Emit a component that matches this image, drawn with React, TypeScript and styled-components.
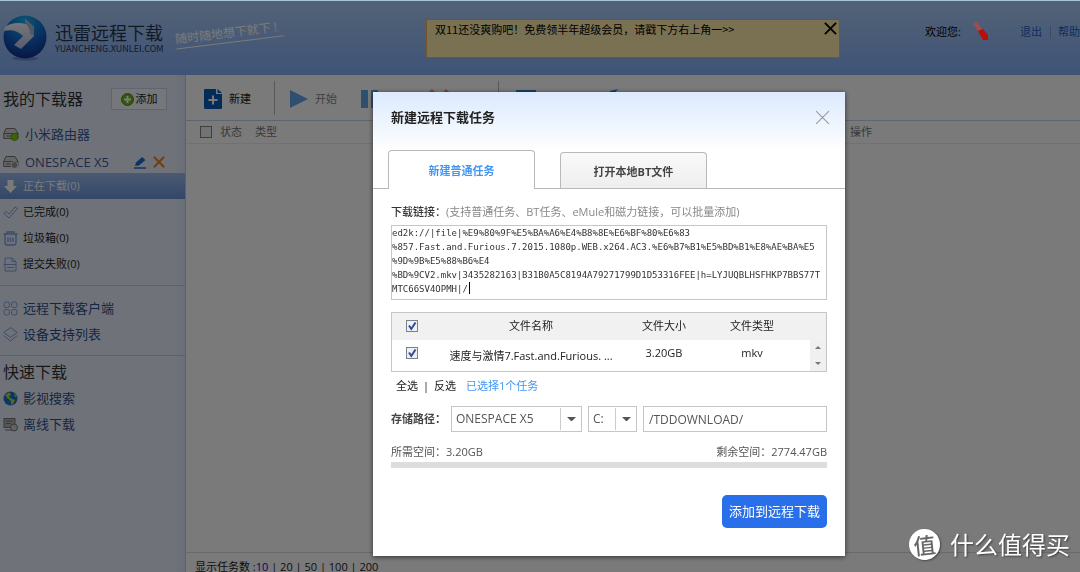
import React, { useState } from "react";
import styled, { createGlobalStyle, css } from "styled-components";

const Global = createGlobalStyle`
  * { box-sizing: border-box; }
  body { margin: 0; background: #fff; }
  body, button, input, select, textarea, table {
    font-family: "Open Sans", "Noto Sans CJK SC", sans-serif;
    font-size: 11px;
    line-height: 18px;
    color: #222;
  }
  button { background: none; border: 0; padding: 0; }
  a { text-decoration: none; color: inherit; }
  svg { display: block; flex: none; }
`;

const Page = styled.div`
  height: 100vh;
  display: flex;
  flex-direction: column;
  overflow: hidden;
`;

/* ---------- header ---------- */
const Header = styled.header`
  flex: none;
  height: 75px;
  display: flex;
  align-items: center;
  padding-left: 3px;
  border-top: 1px solid #a9c4d8;
  background: linear-gradient(#adcdf6, #84aef8);
`;
const Brand = styled.div`
  flex: none;
  width: 120px;
  margin-left: 8px;
  color: #25364f;
  white-space: nowrap;
`;
const BrandName = styled.h1`
  margin: 0;
  font-size: 18px;
  font-weight: 400;
  line-height: 22px;
`;
const Domain = styled.small`
  display: block;
  font-family: "Noto Sans CJK SC", sans-serif;
  font-size: 9px;
  line-height: 10px;
`;
const Slogan = styled.span`
  flex: none;
  width: 108px;
  margin-bottom: 10px;
  font-size: 12px;
  color: #fff;
  white-space: nowrap;
  border-bottom: 1px solid #fff;
  transform: rotate(-7deg);
`;
const Banner = styled.div`
  flex: none;
  width: 414px;
  height: 39px;
  margin-left: 143px;
  padding: 0 2px 0 8px;
  display: flex;
  justify-content: space-between;
  align-items: flex-start;
  background: #feecab;
  border: 1px solid #f0b060;
  font-family: "Noto Sans CJK SC", sans-serif;
  color: #000;
`;
const BannerClose = styled.button`
  padding-top: 2px;
`;
const UserNav = styled.nav`
  margin-left: auto;
  margin-bottom: 12px;
  display: flex;
  align-items: center;
  white-space: nowrap;
  color: #000;
`;
const Avatar = styled.span`
  position: relative;
  z-index: 3;
  margin: 0 30px 0 12px;
`;
const NavLink = styled.a`
  color: #1f62c4;
`;
const NavDivider = styled.span`
  width: 1px;
  height: 12px;
  margin: 0 7px 0 8px;
  background: #7d9cd6;
`;

/* ---------- sidebar ---------- */
const Body = styled.div`
  flex: 1;
  min-height: 0;
  display: flex;
`;
const Sidebar = styled.aside`
  flex: none;
  width: 186px;
  background: linear-gradient(90deg, #e9f1fc 170px, #dbe7fb);
  border-right: 1px solid #b8cbec;
`;
const SideTitle = styled.div<{ $quick?: boolean }>`
  display: flex;
  align-items: center;
  height: ${(p) => (p.$quick ? 29 : 42)}px;
  padding: ${(p) => (p.$quick ? 3 : 6)}px 18px 0 3px;
  justify-content: space-between;
`;
const SideHeading = styled.h2`
  margin: 0;
  font-size: 16px;
  font-weight: 400;
  line-height: 24px;
  color: #333;
`;
const AddButton = styled.button`
  display: flex;
  align-items: center;
  justify-content: center;
  gap: 2px;
  width: 56px;
  height: 22px;
  border: 1px solid #c9d5ea;
  background: #f6f9ff;
`;
const Device = styled.div`
  display: flex;
  align-items: center;
  gap: 6px;
  height: 28px;
  padding: 6px 20px 0 3px;
  font-size: 13px;
  color: #3a5a98;
`;
const DeviceName = styled.a`
  margin-right: auto;
`;
const SideList = styled.ul`
  list-style: none;
  margin: 0;
  padding: 0;
`;
const SideGroup = styled.div<{ $top?: number }>`
  padding: ${(p) => p.$top ?? 0}px 0 8px;
  border-bottom: 1px solid #b4cfee;
`;
const SideLink = styled.a<{ $active?: boolean; $blue?: boolean }>`
  display: flex;
  align-items: center;
  gap: 5px;
  height: 26px;
  padding-left: 3px;
  color: #222;
  ${(p) => p.$blue && css`font-size: 13px; color: #2f4f8f;`}
  ${(p) => p.$active && css`background: linear-gradient(#9dbdf0, #6a94da); color: #fff;`}
`;

/* ---------- main ---------- */
const Main = styled.main`
  flex: 1;
  min-width: 0;
  display: flex;
  flex-direction: column;
`;
const Toolbar = styled.div`
  flex: none;
  display: flex;
  align-items: center;
  height: 46px;
  padding-left: 18px;
  border-bottom: 1px solid #c3d3ea;
`;
const Tool = styled.button<{ $width?: number; $muted?: boolean }>`
  display: flex;
  align-items: center;
  gap: 7px;
  margin-right: 23px;
  padding-top: 3px;
  width: ${(p) => (p.$width ? p.$width + "px" : "auto")};
  color: ${(p) => (p.$muted ? "#888" : "#222")};
`;
const ToolDivider = styled.span`
  width: 1px;
  height: 34px;
  margin-right: 15px;
  background: #bbb;
`;
const TaskTable = styled.table`
  flex: none;
  width: 100%;
  table-layout: fixed;
  border-collapse: collapse;
  border-bottom: 1px solid #ececec;
`;
const TaskHead = styled.th<{ $width?: number }>`
  width: ${(p) => (p.$width ? p.$width + "px" : "auto")};
  height: 22px;
  padding: 0 0 0 ${(p) => (p.$width === 34 ? 14 : 0)}px;
  text-align: left;
  font-weight: 400;
  color: #777;
`;
const Tick = styled.input`
  appearance: none;
  display: block;
  width: 12px;
  height: 12px;
  margin: 0;
  border: 1px solid #7c828c;
  background: #eef0f4;
  &:checked {
    background: #eef0f4
      url("data:image/svg+xml,%3Csvg xmlns='http://www.w3.org/2000/svg' viewBox='0 0 10 10'%3E%3Cpath d='M2 4.5 4.3 8 8.5 1.5' fill='none' stroke='%23324a9a' stroke-width='2'/%3E%3C/svg%3E");
  }
`;
const Footer = styled.footer`
  flex: none;
  height: 20px;
  margin-top: auto;
  padding: 5px 0 0 9px;
  border-top: 1px solid #dcdcdc;
  font-size: 11px;
  line-height: 18px;
  white-space: pre;
`;
const CurrentSize = styled.a`
  color: #1400d8;
`;

/* ---------- dialog ---------- */
const Scrim = styled.div`
  position: fixed;
  inset: 1px 0 0;
  z-index: 2;
  display: flex;
  justify-content: center;
  align-items: flex-start;
  padding: 91px 0 0 138px;
  background: rgba(0, 0, 0, 0.52);
`;
const Dialog = styled.section`
  width: 472px;
  padding-bottom: 28px;
  background: linear-gradient(#dbeafd, #fff 60px);
  box-shadow: 0 1px 5px rgba(0, 0, 0, 0.6);
`;
const DialogHead = styled.div`
  display: flex;
  justify-content: space-between;
  align-items: center;
  height: 50px;
  padding: 0 15px 0 18px;
`;
const DialogTitle = styled.h2`
  margin: 0;
  font-size: 13px;
  font-weight: 700;
`;
const Tabs = styled.div`
  display: flex;
  align-items: flex-end;
  gap: 25px;
  height: 47px;
  padding-left: 15px;
  border-bottom: 1px solid #b9b9b9;
`;
const Tab = styled.button<{ $active?: boolean }>`
  width: 147px;
  height: ${(p) => (p.$active ? 39 : 36)}px;
  margin-bottom: ${(p) => (p.$active ? -1 : 0)}px;
  padding-top: 2px;
  border: 1px solid #b9b9b9;
  border-bottom: 0;
  border-radius: 4px 4px 0 0;
  font-weight: 700;
  color: ${(p) => (p.$active ? "#4295f5" : "#444")};
  background: ${(p) => (p.$active ? "#fff" : "linear-gradient(#f9f9f9, #eee)")};
`;
const Form = styled.form`
  padding: 14px 18px 0;
`;
const FieldLabel = styled.label`
  display: block;
  font-weight: 500;
  color: #333;
`;
const Hint = styled.span`
  font-weight: 400;
  color: #888;
`;
const LinkField = styled.div`
  position: relative;
  margin-top: 4px;
`;
const LinkBox = styled.textarea`
  display: block;
  width: 100%;
  height: 75px;
  padding: 0;
  border: 1px solid #c6c6c6;
  outline: 0;
  resize: none;
  overflow: hidden;
  white-space: pre;
  font-family: "DejaVu Sans Mono", monospace;
  font-size: 9px;
  line-height: 14px;
  color: #333;
`;
const Caret = styled.span`
  position: absolute;
  left: 78px;
  top: 57px;
  width: 1px;
  height: 12px;
  background: #000;
`;
const FileBox = styled.div`
  position: relative;
  margin-top: 12px;
  border: 1px solid #c6c6c6;
`;
const FileTable = styled.table`
  width: 100%;
  table-layout: fixed;
  border-collapse: collapse;
  text-align: center;
`;
const FileHead = styled.th<{ $width?: number }>`
  width: ${(p) => (p.$width ? p.$width + "px" : "auto")};
  height: 27px;
  padding: 0 0 2px;
  background: #f1f1f1;
  font-weight: 400;
`;
const FileCell = styled.td<{ $name?: boolean }>`
  height: 31px;
  padding: 0 0 ${(p) => (p.$name ? 0 : 5)}px;
`;
const TickHolder = styled.div`
  padding-left: 14px;
`;
const Scrollbar = styled.div`
  position: absolute;
  right: 0;
  bottom: 0;
  width: 16px;
  height: 31px;
  display: flex;
  flex-direction: column;
  align-items: center;
  justify-content: space-around;
  background: #f0f0f0;
`;
const SelectRow = styled.div`
  display: flex;
  align-items: center;
  gap: 5px;
  padding: 5px 0 0 5px;
`;
const Count = styled.span`
  margin-left: 5px;
  color: #4295f5;
`;
const PathRow = styled.div`
  display: flex;
  align-items: center;
  gap: 6px;
  margin-top: 11px;
`;
const PathLabel = styled.label`
  width: 54px;
  font-weight: 700;
  color: #444;
  white-space: nowrap;
`;
const SelectWrap = styled.div<{ $width: number }>`
  display: flex;
  width: ${(p) => p.$width}px;
  height: 26px;
  border: 1px solid #c6c6c6;
`;
const Select = styled.select`
  appearance: none;
  flex: 1;
  min-width: 0;
  padding: 0 0 0 4px;
  border: 0;
  outline: 0;
  background: none;
  font-size: 12px;
  color: #555;
`;
const Arrow = styled.span`
  display: flex;
  align-items: center;
  justify-content: center;
  width: 21px;
  margin: 1px 0;
  border-left: 1px solid #ccc;
`;
const PathInput = styled.input`
  flex: 1;
  min-width: 0;
  height: 26px;
  padding: 1px 5px 0;
  border: 1px solid #c6c6c6;
  font-size: 12px;
  color: #555;
`;
const SpaceRow = styled.div`
  display: flex;
  justify-content: space-between;
  margin-top: 11px;
  color: #555;
`;
const SpaceBar = styled.div`
  height: 6px;
  margin-top: 1px;
  background: #ddd;
`;
const Submit = styled.button`
  display: block;
  width: 105px;
  height: 33px;
  margin: 27px 0 0 auto;
  padding-bottom: 2px;
  border-radius: 5px;
  background: #286fe9;
  color: #fff;
  font-size: 13px;
`;

/* ---------- watermark ---------- */
const Watermark = styled.div`
  position: fixed;
  right: 10px;
  bottom: 12px;
  z-index: 4;
  display: flex;
  align-items: center;
  gap: 10px;
  font-family: "Noto Sans CJK SC", sans-serif;
  font-size: 24px;
  line-height: 32px;
  color: #fff;
  text-shadow: 1px 1px 2px rgba(0, 0, 0, 0.5);
`;
const Seal = styled.span`
  width: 31px;
  height: 31px;
  border-radius: 50%;
  background: #fff;
  color: #666;
  font-size: 22px;
  font-weight: 500;
  line-height: 30px;
  text-align: center;
  text-shadow: none;
  transform: rotate(-6deg);
  box-shadow: 1px 1px 2px rgba(0, 0, 0, 0.4);
`;

const Logo = () => (
  <svg width="44" height="46" viewBox="0 0 44 46" aria-hidden="true">
    <defs>
      <radialGradient id="ball" cx="0.5" cy="0.15" r="0.95">
        <stop offset="0" stopColor="#18b4f4" />
        <stop offset="0.5" stopColor="#1263c8" />
        <stop offset="1" stopColor="#10207c" />
      </radialGradient>
      <linearGradient id="wing" x1="0" y1="0" x2="0" y2="1">
        <stop offset="0" stopColor="#fff" />
        <stop offset="1" stopColor="#b9c0e2" />
      </linearGradient>
    </defs>
    <ellipse cx="22" cy="43.500" rx="13" ry="2" fill="#6e8fc8" />
    <circle cx="22" cy="22" r="21.500" fill="url(#ball)" />
    <path d="M2 12 Q10 6 23 9 L22 4 L31 12 L31 21 L18 34 L11 30 L20 21 Q12 13 1 16Z" fill="url(#wing)" />
    <path d="M22 4 L31 12 L31 21 L27 19 Q27 13 23 9Z" fill="#a9b4d8" />
  </svg>
);
const Cross = ({ size, color, width }: { size: number; color: string; width: number }) => (
  <svg width={size} height={size} viewBox="0 0 14 14" aria-hidden="true">
    <path d="M1 1 13 13M13 1 1 13" stroke={color} strokeWidth={width} fill="none" />
  </svg>
);
const Drive = ({ on }: { on?: boolean }) => (
  <svg width="16" height="14" viewBox="0 0 16 14" aria-hidden="true">
    <path d="M3 1.500h9l3 5v5H.700v-5z" fill="#d4d4d4" stroke="#777" />
    <path d="M1 6.500h14M3 9h6" stroke="#777" />
    <circle cx="11.500" cy="10" r="3.500" fill={on ? "#7ed60a" : "#999"} stroke={on ? "#5da800" : "#eee"} />
  </svg>
);
const line = { fill: "none", stroke: "#7d9fdc", strokeWidth: 1 };
const Glyph = ({ children }: { children: React.ReactNode }) => (
  <svg width="15" height="15" viewBox="0 0 15 15" aria-hidden="true">{children}</svg>
);
const Triangle = ({ up, size = 9, color = "#555" }: { up?: boolean; size?: number; color?: string }) => (
  <svg width={size} height={size / 2} viewBox="0 0 10 5" preserveAspectRatio="none" aria-hidden="true">
    <path d={up ? "M0 5 5 0 10 5Z" : "M0 0 5 5 10 0Z"} fill={color} />
  </svg>
);

const LINK = [
  "ed2k://|file|%E9%80%9F%E5%BA%A6%E4%B8%8E%E6%BF%80%E6%83",
  "%857.Fast.and.Furious.7.2015.1080p.WEB.x264.AC3.%E6%B7%B1%E5%BD%B1%E8%AE%BA%E5",
  "%9D%9B%E5%88%B6%E4",
  "%BD%9CV2.mkv|3435282163|B31B0A5C8194A79271799D1D53316FEE|h=LYJUQBLHSFHKP7BBS77T",
  "MTC66SV4OPMH|/",
].join("\n");

export default function App() {
  const [link, setLink] = useState(LINK);
  const [path, setPath] = useState("/TDDOWNLOAD/");
  return (
    <Page>
      <Global />
      <Header>
        <Logo />
        <Brand>
          <BrandName>迅雷远程下载</BrandName>
          <Domain>YUANCHENG.XUNLEI.COM</Domain>
        </Brand>
        <Slogan>随时随地想下就下 !</Slogan>
        <Banner>
          <span>双11还没爽购吧！免费领半年超级会员，请戳下方右上角一&gt;&gt;</span>
          <BannerClose aria-label="关闭公告"><Cross size={13} color="#000" width={2} /></BannerClose>
        </Banner>
        <UserNav>
          欢迎您:
          <Avatar>
            <svg width="17" height="20" viewBox="0 0 17 20" aria-hidden="true">
              <path d="M2 1 8 9" stroke="#a8494c" strokeWidth="4" />
              <path d="M5 9 10 7 15 13 15 18 10 18Z" fill="#bd0d0a" />
            </svg>
          </Avatar>
          <NavLink href="#logout">退出</NavLink>
          <NavDivider />
          <NavLink href="#help">帮助</NavLink>
        </UserNav>
      </Header>

      <Body>
        <Sidebar>
          <SideTitle>
            <SideHeading>我的下载器</SideHeading>
            <AddButton>
              <svg width="13" height="13" viewBox="0 0 13 13" aria-hidden="true">
                <circle cx="6.500" cy="6.500" r="6" fill="#6cb80e" stroke="#4c8c08" />
                <path d="M6.500 3v7M3 6.500h7" stroke="#fff" strokeWidth="2" />
              </svg>
              添加
            </AddButton>
          </SideTitle>
          <Device>
            <Drive on />
            <DeviceName href="#mi">小米路由器</DeviceName>
          </Device>
          <Device>
            <Drive />
            <DeviceName href="#onespace">ONESPACE X5</DeviceName>
            <button aria-label="编辑">
              <svg width="13" height="13" viewBox="0 0 13 13" aria-hidden="true">
                <path d="M1 10 2 6.500 8 1 11.500 4 5 9.500Z" fill="#1d6fd0" />
                <path d="M0 12h12" stroke="#1d6fd0" strokeWidth="1.500" />
              </svg>
            </button>
            <button aria-label="删除设备"><Cross size={12} color="#f58220" width={2.5} /></button>
          </Device>
          <SideGroup>
            <SideList>
              <li><SideLink href="#downloading" $active>
                <Glyph><path d="M4.500 1h6v6H14L7.500 14 1 7h3.500z" fill="#fff" /></Glyph>正在下载(0)
              </SideLink></li>
              <li><SideLink href="#done">
                <Glyph><path d="M.800 8.500 3 6.500 6 9 12 2 14.300 3.500 6 13Z" {...line} /></Glyph>已完成(0)
              </SideLink></li>
              <li><SideLink href="#trash">
                <Glyph><path d="M.500 3h14M4 3V1h7v2M2 3v9q0 2 2 2h7q2 0 2-2V3M5 6.500v4.500M7.500 6.500v4.500M10 6.500v4.500" {...line} strokeWidth={1.3} /></Glyph>垃圾箱(0)
              </SideLink></li>
              <li><SideLink href="#failed">
                <Glyph><path d="M2 7V1h7l4 3.500V7M9 1v3.500h4M.600 7.500h13M2 8v6h11V8M4 10.500h7" {...line} /></Glyph>提交失败(0)
              </SideLink></li>
            </SideList>
          </SideGroup>
          <SideGroup $top={9}>
            <SideList>
              <li><SideLink href="#client" $blue>
                <Glyph>
                  <rect x="1" y="1" width="5.500" height="5.500" rx="2" {...line} />
                  <rect x="8.500" y="1" width="5.500" height="5.500" rx="2" {...line} />
                  <rect x="1" y="8.500" width="5.500" height="5.500" rx="2" {...line} />
                  <rect x="8.500" y="8.500" width="5.500" height="5.500" rx="2" {...line} />
                </Glyph>远程下载客户端
              </SideLink></li>
              <li><SideLink href="#devices" $blue>
                <Glyph><path d="M7.500.600 14.300 5.500 7.500 10.300.700 5.500ZM.700 8.500 7.500 14 14.300 8.500" {...line} /></Glyph>设备支持列表
              </SideLink></li>
            </SideList>
          </SideGroup>
          <SideTitle $quick>
            <SideHeading>快速下载</SideHeading>
          </SideTitle>
          <SideList>
            <li><SideLink href="#search" $blue>
              <Glyph>
                <circle cx="7.500" cy="7.500" r="7" fill="#1676cc" />
                <path d="M2 4 6 1.500 8 3 6 6 9 8 12 9 10 13 8 14 8 10 5 7.500ZM11 2 14 5 12 6Z" fill="#b4d84a" />
              </Glyph>影视搜索
            </SideLink></li>
            <li><SideLink href="#offline" $blue>
              <Glyph>
                <rect x="1" y="1.500" width="11" height="9" fill="#b5b5b5" stroke="#777" />
                <path d="M3 4h7M3 6.500h5M2 13h7" stroke="#777" />
                <circle cx="11" cy="10.500" r="3.500" fill="#ccc" stroke="#777" />
              </Glyph>离线下载
            </SideLink></li>
          </SideList>
        </Sidebar>

        <Main>
          <Toolbar>
            <Tool>
              <svg width="18" height="20" viewBox="0 0 18 20" aria-hidden="true">
                <path d="M1 0h11v5h6v14q0 1-1 1H1q-1 0-1-1V1q0-1 1-1z" fill="#0a5cb8" />
                <path d="M13.500 0 18 4h-4.500z" fill="#0a5cb8" />
                <path d="M9 6.500v9M4.500 11h9" stroke="#fff" strokeWidth="2" />
              </svg>
              新建
            </Tool>
            <ToolDivider />
            <Tool $muted>
              <svg width="18" height="18" viewBox="0 0 18 18" aria-hidden="true"><path d="M0 0 18 9 0 18Z" fill="#64a4e8" /></svg>
              开始
            </Tool>
            <Tool $width={46} aria-label="暂停">
              <svg width="18" height="18" viewBox="0 0 18 18" aria-hidden="true"><path d="M1 0h7v18H1zM11 0h7v18h-7z" fill="#64a4e8" /></svg>
            </Tool>
            <Tool $width={46} aria-label="删除"><Cross size={20} color="#f0a080" width={3} /></Tool>
            <ToolDivider />
            <Tool $width={70} aria-label="打开文件夹">
              <svg width="22" height="18" viewBox="0 0 22 18" aria-hidden="true"><path d="M2 0h20v18H2z" fill="#3c86cc" /></svg>
            </Tool>
            <Tool $width={46} aria-label="设置">
              <svg width="18" height="20" viewBox="0 0 18 20" aria-hidden="true"><path d="M0 16 3 2 11 0 6 6 8 9 4 19Z" fill="#3c86cc" /></svg>
            </Tool>
          </Toolbar>
          <TaskTable>
            <thead>
              <tr>
                <TaskHead $width={34}><Tick type="checkbox" aria-label="选择全部任务" /></TaskHead>
                <TaskHead $width={35}>状态</TaskHead>
                <TaskHead>类型</TaskHead>
                <TaskHead $width={230}>操作</TaskHead>
              </tr>
            </thead>
          </TaskTable>
          <Footer>
            显示任务数 :<CurrentSize href="#10">10</CurrentSize> | <a href="#20">20</a> | <a href="#50">50</a> | <a href="#100">100</a> | <a href="#200">200</a>
          </Footer>
        </Main>
      </Body>

      <Scrim>
        <Dialog role="dialog" aria-labelledby="dialog-title">
          <DialogHead>
            <DialogTitle id="dialog-title">新建远程下载任务</DialogTitle>
            <button aria-label="关闭"><Cross size={15} color="#999" width={1} /></button>
          </DialogHead>
          <Tabs role="tablist">
            <Tab role="tab" aria-selected="true" $active>新建普通任务</Tab>
            <Tab role="tab" aria-selected="false">打开本地BT文件</Tab>
          </Tabs>
          <Form onSubmit={(e) => e.preventDefault()}>
            <FieldLabel htmlFor="link">
              下载链接：<Hint>(支持普通任务、BT任务、eMule和磁力链接，可以批量添加)</Hint>
            </FieldLabel>
            <LinkField>
              <LinkBox id="link" spellCheck={false} value={link} onChange={(e) => setLink(e.target.value)} />
              <Caret />
            </LinkField>
            <FileBox>
              <FileTable>
                <thead>
                  <tr>
                    <FileHead $width={40}><TickHolder><Tick type="checkbox" defaultChecked aria-label="选择全部文件" /></TickHolder></FileHead>
                    <FileHead>文件名称</FileHead>
                    <FileHead $width={68}>文件大小</FileHead>
                    <FileHead $width={108}>文件类型</FileHead>
                    <FileHead $width={20} aria-hidden="true" />
                  </tr>
                </thead>
                <tbody>
                  <tr>
                    <FileCell><TickHolder><Tick type="checkbox" defaultChecked aria-label="选择文件" /></TickHolder></FileCell>
                    <FileCell $name>速度与激情7.Fast.and.Furious. ...</FileCell>
                    <FileCell>3.20GB</FileCell>
                    <FileCell>mkv</FileCell>
                    <FileCell />
                  </tr>
                </tbody>
              </FileTable>
              <Scrollbar aria-hidden="true">
                <Triangle up size={6} color="#777" />
                <Triangle size={6} color="#777" />
              </Scrollbar>
            </FileBox>
            <SelectRow>
              <button type="button">全选</button>|<button type="button">反选</button>
              <Count>已选择1个任务</Count>
            </SelectRow>
            <PathRow>
              <PathLabel htmlFor="path">存储路径：</PathLabel>
              <SelectWrap $width={131}>
                <Select aria-label="设备"><option>ONESPACE X5</option></Select>
                <Arrow><Triangle /></Arrow>
              </SelectWrap>
              <SelectWrap $width={49}>
                <Select aria-label="磁盘"><option>C:</option></Select>
                <Arrow><Triangle /></Arrow>
              </SelectWrap>
              <PathInput id="path" value={path} onChange={(e) => setPath(e.target.value)} />
            </PathRow>
            <SpaceRow>
              <span>所需空间：3.20GB</span>
              <span>剩余空间：2774.47GB</span>
            </SpaceRow>
            <SpaceBar />
            <Submit type="submit">添加到远程下载</Submit>
          </Form>
        </Dialog>
      </Scrim>

      <Watermark>
        <Seal>值</Seal>
        什么值得买
      </Watermark>
    </Page>
  );
}
